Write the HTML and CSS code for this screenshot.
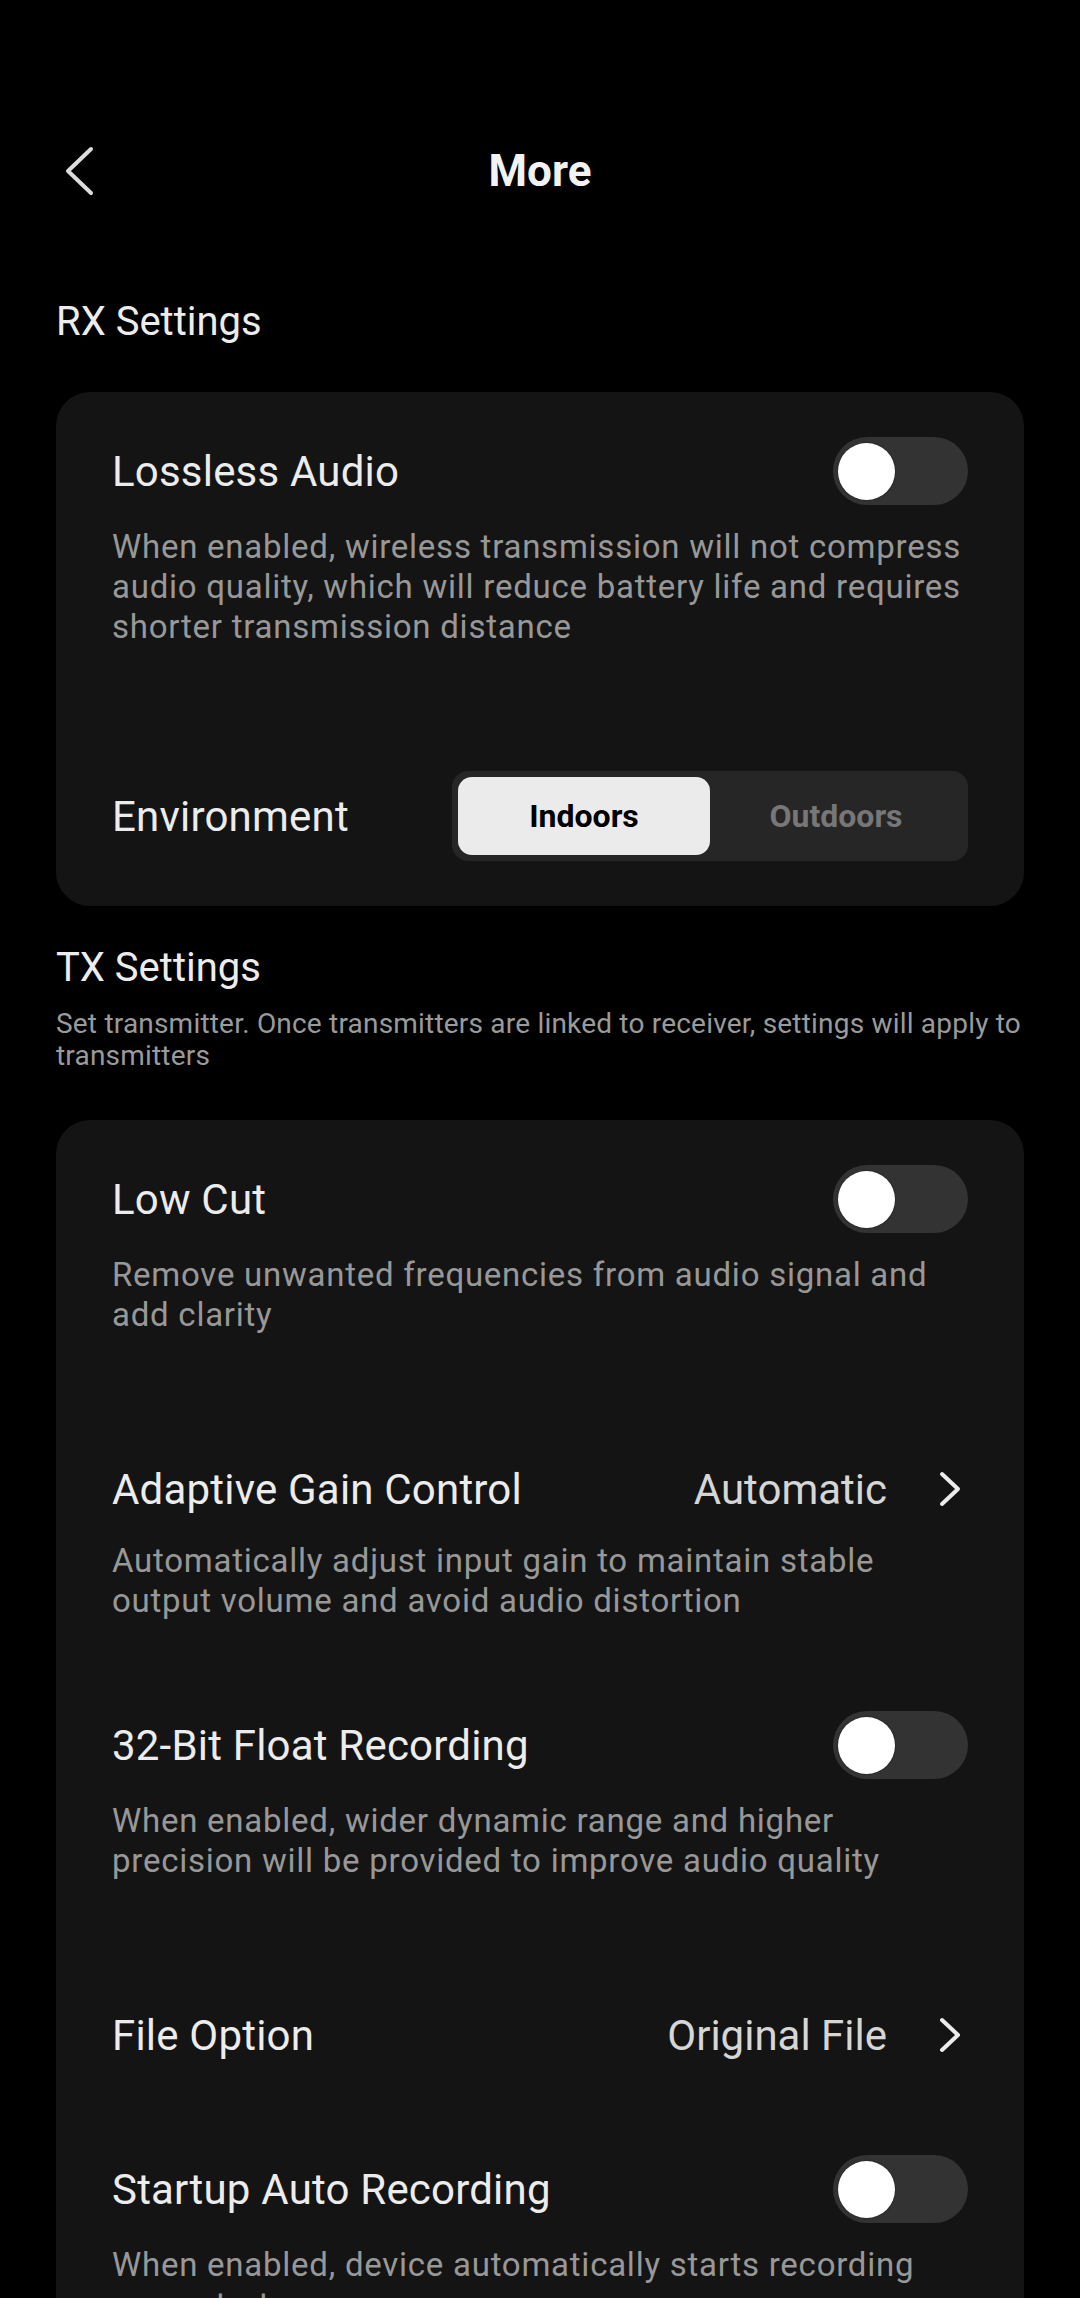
FILE: index.html
```html
<!DOCTYPE html>
<html lang="en">
<head>
    <meta charset="UTF-8">
    <meta name="viewport" content="width=device-width, initial-scale=1.0">
    <title>More</title>
    <link rel="stylesheet" href="styles.css">
</head>
<body>
    <div class="page">
        <header class="topbar">
            <button class="back" aria-label="Back">
                <svg width="44" height="56" viewBox="0 0 44 56">
                    <path d="M35 6 L12 28 L35 50" fill="none" stroke="#dcdcdc" stroke-width="4" stroke-linecap="round" stroke-linejoin="round"/>
                </svg>
            </button>
            <h1>More</h1>
            <span></span>
        </header>

        <h2 class="group-title">RX Settings</h2>
        <div class="card">
            <div class="item item-toggle">
                <div class="item-head">
                    <span class="item-name">Lossless Audio</span>
                    <span class="switch"></span>
                </div>
                <p class="item-desc">When enabled, wireless transmission will not compress audio quality, which will reduce battery life and requires shorter transmission distance</p>
            </div>
            <div class="item item-last">
                <div class="item-head">
                    <span class="item-name">Environment</span>
                    <div class="segment">
                        <span class="seg active">Indoors</span>
                        <span class="seg">Outdoors</span>
                    </div>
                </div>
            </div>
        </div>

        <h2 class="group-title tx">TX Settings</h2>
        <p class="group-note">Set transmitter. Once transmitters are linked to receiver, settings will apply to transmitters</p>
        <div class="card">
            <div class="item item-toggle">
                <div class="item-head">
                    <span class="item-name">Low Cut</span>
                    <span class="switch"></span>
                </div>
                <p class="item-desc">Remove unwanted frequencies from audio signal and add clarity</p>
            </div>
            <div class="item item-link">
                <div class="item-head">
                    <span class="item-name">Adaptive Gain Control</span>
                    <span class="item-value">Automatic</span>
                    <svg class="chev" width="30" height="36" viewBox="0 0 30 36">
                        <path d="M4 3 L20 18 L4 33" fill="none" stroke="#ececec" stroke-width="4" stroke-linecap="round" stroke-linejoin="round"/>
                    </svg>
                </div>
                <p class="item-desc">Automatically adjust input gain to maintain stable output volume and avoid audio distortion</p>
            </div>
            <div class="item item-toggle">
                <div class="item-head">
                    <span class="item-name">32-Bit Float Recording</span>
                    <span class="switch"></span>
                </div>
                <p class="item-desc">When enabled, wider dynamic range and higher precision will be provided to improve audio quality</p>
            </div>
            <div class="item item-link">
                <div class="item-head">
                    <span class="item-name">File Option</span>
                    <span class="item-value">Original File</span>
                    <svg class="chev" width="30" height="36" viewBox="0 0 30 36">
                        <path d="M4 3 L20 18 L4 33" fill="none" stroke="#ececec" stroke-width="4" stroke-linecap="round" stroke-linejoin="round"/>
                    </svg>
                </div>
            </div>
            <div class="item item-toggle">
                <div class="item-head">
                    <span class="item-name">Startup Auto Recording</span>
                    <span class="switch"></span>
                </div>
                <p class="item-desc">When enabled, device automatically starts recording upon startup</p>
            </div>
        </div>
    </div>
</body>
</html>
```

FILE: styles.css
```css
body {
    margin: 0;
    background-color: #000;
    font-family: Roboto, "Noto Sans", Arial, sans-serif;
    color: #ececec;
}
.page {
    padding: 0 56px;
}
.topbar {
    display: grid;
    grid-template-columns: 1fr auto 1fr;
    align-items: center;
    height: 96px;
    margin-top: 123px;
}
.back {
    display: flex;
    background: none;
    border: none;
    padding: 0;
    cursor: pointer;
}
.topbar h1 {
    margin: 0;
    font-size: 44px;
    font-weight: 700;
    color: #f2f2f2;
}
.group-title {
    margin: 78px 0 45px;
    font-size: 40px;
    line-height: 50px;
    font-weight: 400;
    color: #ececec;
}
.group-title.tx {
    margin: 37px 0 15px;
}
.group-note {
    margin: 0 0 48px;
    font-size: 28px;
    line-height: 32px;
    letter-spacing: 0.2px;
    color: #9a9a9a;
}
.card {
    background-color: #141414;
    border-radius: 34px;
    padding: 45px 56px;
}
.item-toggle {
    padding-bottom: 124px;
}
.item-link {
    padding-bottom: 90px;
}
.item-head {
    display: flex;
    align-items: center;
    min-height: 60px;
}
.item-name {
    flex: 1;
    font-size: 42px;
    letter-spacing: 0.2px;
    color: #ececec;
}
.item-value {
    font-size: 42px;
    color: #d6d6d6;
}
.chev {
    margin-left: 51px;
    flex-shrink: 0;
}
.item-desc {
    margin: 22px 0 0;
    font-size: 33px;
    line-height: 40px;
    letter-spacing: 0.75px;
    color: #989898;
}
.switch {
    display: flex;
    align-items: center;
    width: 135px;
    height: 68px;
    box-sizing: border-box;
    padding: 0 5px;
    border-radius: 34px;
    background-color: #333;
}
.switch::before {
    content: "";
    width: 57px;
    height: 57px;
    border-radius: 50%;
    background-color: #fff;
    box-shadow: 0 0 2px rgba(0,0,0,0.5);
}
.segment {
    display: grid;
    grid-template-columns: 1fr 1fr;
    width: 516px;
    height: 90px;
    box-sizing: border-box;
    padding: 6px;
    border-radius: 16px;
    background-color: #262626;
}
.seg {
    display: flex;
    align-items: center;
    justify-content: center;
    font-size: 32px;
    font-weight: 700;
    color: #777;
    border-radius: 14px;
}
.seg.active {
    background-color: #ebebeb;
    color: #000;
}
```
